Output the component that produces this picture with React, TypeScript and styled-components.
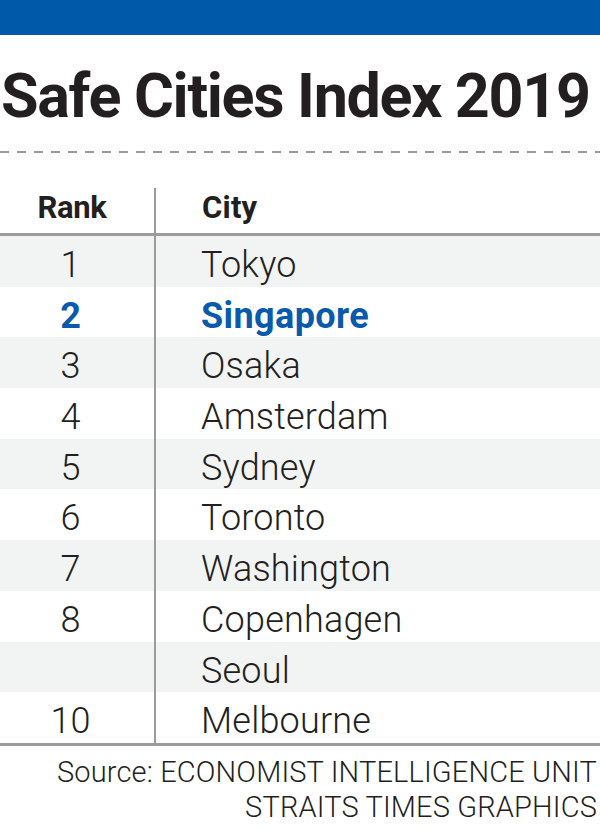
import React from "react";
import styled, { createGlobalStyle } from "styled-components";

const GlobalStyle = createGlobalStyle`
  html, body {
    margin: 0;
    padding: 0;
    background: #ffffff;
  }
  body {
    font-family: Roboto, "Liberation Sans", sans-serif;
    color: #231f20;
  }
`;

const Page = styled.div`
  width: 600px;
  display: flex;
  flex-direction: column;
`;

const TopBar = styled.div`
  height: 35px;
  background-color: #0059a9;
`;

const Title = styled.h1`
  margin: 25px 0 0 0;
  padding-left: 1px;
  font-size: 61px;
  line-height: 72px;
  font-weight: 700;
  letter-spacing: -1.3px;
  white-space: nowrap;
`;

const DashedRule = styled.div`
  margin-top: 19px;
  height: 2px;
  background: repeating-linear-gradient(
    to right,
    #9a9a9a 0,
    #9a9a9a 9px,
    transparent 9px,
    transparent 17px
  );
`;

const Table = styled.div`
  display: flex;
  flex-direction: column;
  border-bottom: 3px solid #9b9b9b;
`;

const HeaderRow = styled.div`
  display: grid;
  grid-template-columns: 156px 1fr;
  padding-top: 35px;
  border-bottom: 3px solid #9b9b9b;
`;

const HeaderCell = styled.div<{ rank?: boolean }>`
  height: 45px;
  box-sizing: border-box;
  padding-top: 2px;
  font-size: 31px;
  line-height: 36px;
  font-weight: 700;
  letter-spacing: -0.3px;
  ${props => props.rank ? {
    "text-align": "center",
    "padding-right": "10px",
    "border-right": "2px solid #9b9b9b"
  } : {
    "padding-left": "46px",
    "letter-spacing": "0.2px"
  }}
`;

const Row = styled.div<{ shaded?: boolean }>`
  display: grid;
  grid-template-columns: 156px 1fr;
  height: 50.7px;
  background-color: ${props => props.shaded ? "#f2f4f4" : "#ffffff"};
`;

const Cell = styled.div<{ rank?: boolean, highlight?: boolean }>`
  box-sizing: border-box;
  padding-top: 8px;
  font-size: 36px;
  line-height: 42px;
  font-weight: ${props => props.highlight ? 700 : 300};
  color: ${props => props.highlight ? "#0a5aab" : "#231f20"};
  white-space: nowrap;
  ${props => props.rank ? {
    "text-align": "center",
    "padding-right": "13px",
    "border-right": "2px solid #9b9b9b"
  } : {
    "padding-left": "45px",
    "letter-spacing": "0.2px"
  }}
  ${props => props.highlight && !props.rank && {
    "letter-spacing": "0.4px"
  }}
`;

const Source = styled.div`
  margin-top: 9px;
  padding-right: 3px;
  text-align: right;
  font-size: 29px;
  line-height: 35px;
  font-weight: 300;
  letter-spacing: 0.15px;
`;

const cities: { rank: string, city: string }[] = [
  { rank: "1", city: "Tokyo" },
  { rank: "2", city: "Singapore" },
  { rank: "3", city: "Osaka" },
  { rank: "4", city: "Amsterdam" },
  { rank: "5", city: "Sydney" },
  { rank: "6", city: "Toronto" },
  { rank: "7", city: "Washington" },
  { rank: "8", city: "Copenhagen" },
  { rank: "", city: "Seoul" },
  { rank: "10", city: "Melbourne" },
];

export default function App() {
  return (<>
    <GlobalStyle/>
    <Page>
      <TopBar/>
      <Title>Safe Cities Index 2019</Title>
      <DashedRule/>
      <Table>
        <HeaderRow>
          <HeaderCell rank>Rank</HeaderCell>
          <HeaderCell>City</HeaderCell>
        </HeaderRow>
        {cities.map((c, i) => {
          const highlight = c.city === "Singapore";
          return (<Row key={c.city} shaded={i % 2 === 0}>
            <Cell rank highlight={highlight}>{c.rank}</Cell>
            <Cell highlight={highlight}>{c.city}</Cell>
          </Row>);
        })}
      </Table>
      <Source>
        Source: ECONOMIST INTELLIGENCE UNIT<br/>
        STRAITS TIMES GRAPHICS
      </Source>
    </Page>
  </>);
}
